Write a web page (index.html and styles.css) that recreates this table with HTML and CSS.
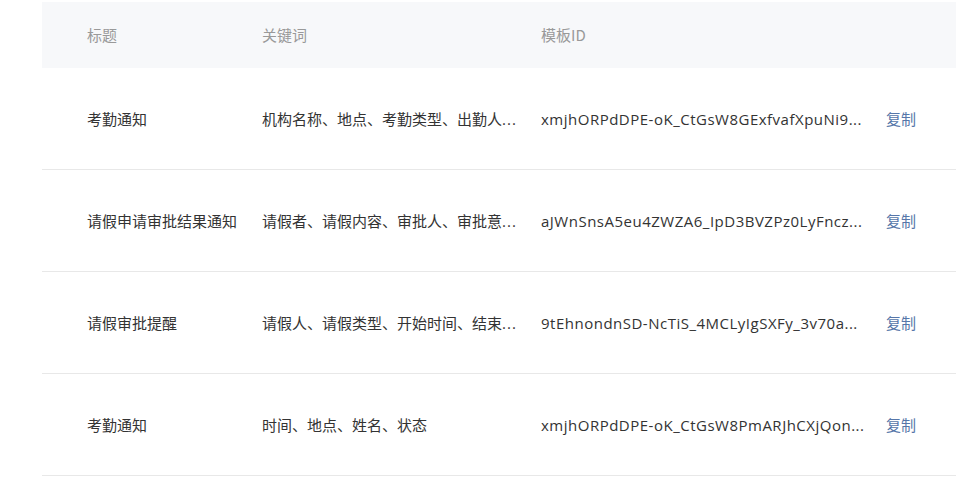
FILE: index.html
```html
<!DOCTYPE html>
<html lang="zh-CN">
<head>
<meta charset="utf-8">
<link rel="stylesheet" href="styles.css">
</head>
<body>
<div class="table">
  <div class="row head">
    <div class="cell c1">标题</div>
    <div class="cell c2">关键词</div>
    <div class="cell c3">模板ID</div>
    <div class="cell c4"></div>
  </div>
  <div class="row">
    <div class="cell c1">考勤通知</div>
    <div class="cell c2">机构名称、地点、考勤类型、出勤人<span class="dots">...</span></div>
    <div class="cell c3 id">xmjhORPdDPE-oK_CtGsW8GExfvafXpuNi9...</div>
    <div class="cell c4"><a class="copy">复制</a></div>
  </div>
  <div class="row">
    <div class="cell c1">请假申请审批结果通知</div>
    <div class="cell c2">请假者、请假内容、审批人、审批意<span class="dots">...</span></div>
    <div class="cell c3 id">aJWnSnsA5eu4ZWZA6_IpD3BVZPz0LyFncz...</div>
    <div class="cell c4"><a class="copy">复制</a></div>
  </div>
  <div class="row">
    <div class="cell c1">请假审批提醒</div>
    <div class="cell c2">请假人、请假类型、开始时间、结束<span class="dots">...</span></div>
    <div class="cell c3 id">9tEhnondnSD-NcTiS_4MCLyIgSXFy_3v70a...</div>
    <div class="cell c4"><a class="copy">复制</a></div>
  </div>
  <div class="row">
    <div class="cell c1">考勤通知</div>
    <div class="cell c2">时间、地点、姓名、状态</div>
    <div class="cell c3 id">xmjhORPdDPE-oK_CtGsW8PmARJhCXjQon...</div>
    <div class="cell c4"><a class="copy">复制</a></div>
  </div>
</div>
</body>
</html>
```
FILE: styles.css
```css
html, body {
  margin: 0;
  padding: 0;
  background: #ffffff;
}
body {
  padding: 2px 0 0 42px;
  font-family: "Noto Sans CJK SC", "Noto Sans", sans-serif;
  font-size: 15px;
  color: #333333;
  overflow: hidden;
}
.table {
  width: 940px;
}
.row {
  display: grid;
  grid-template-columns: 220px 279px 345px 1fr;
  height: 101px;
  border-bottom: 1px solid #e8e8e8;
  align-items: center;
}
.row.head {
  height: 66px;
  border-bottom: none;
  background: #f7f8fa;
  color: #999999;
}
.cell {
  min-width: 0;
  line-height: 20px;
  white-space: nowrap;
}
.c1 {
  padding-left: 45px;
}
.c2 {
  padding-right: 4px;
}
.c3 {
  padding-right: 4px;
}
.id {
  font-family: "Open Sans", "Noto Sans CJK SC", sans-serif;
  font-size: 15px;
  letter-spacing: 0.5px;
}
.dots {
  font-family: "Open Sans", sans-serif;
  letter-spacing: 1px;
}
.copy {
  color: #5676a9;
  cursor: pointer;
}
```
